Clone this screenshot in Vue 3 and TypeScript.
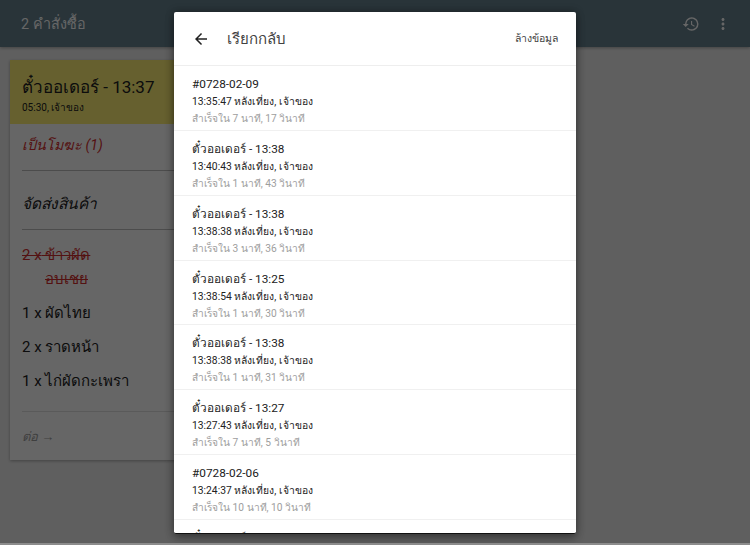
<script setup lang="ts">
interface Row { title: string; time: string; took: string }
const rows: Row[] = [
  { title: '#0728-02-09', time: '13:35:47 หลังเที่ยง, เจ้าของ', took: 'สำเร็จใน 7 นาที, 17 วินาที' },
  { title: 'ตั๋วออเดอร์ - 13:38', time: '13:40:43 หลังเที่ยง, เจ้าของ', took: 'สำเร็จใน 1 นาที, 43 วินาที' },
  { title: 'ตั๋วออเดอร์ - 13:38', time: '13:38:38 หลังเที่ยง, เจ้าของ', took: 'สำเร็จใน 3 นาที, 36 วินาที' },
  { title: 'ตั๋วออเดอร์ - 13:25', time: '13:38:54 หลังเที่ยง, เจ้าของ', took: 'สำเร็จใน 1 นาที, 30 วินาที' },
  { title: 'ตั๋วออเดอร์ - 13:38', time: '13:38:38 หลังเที่ยง, เจ้าของ', took: 'สำเร็จใน 1 นาที, 31 วินาที' },
  { title: 'ตั๋วออเดอร์ - 13:27', time: '13:27:43 หลังเที่ยง, เจ้าของ', took: 'สำเร็จใน 7 นาที, 5 วินาที' },
  { title: '#0728-02-06', time: '13:24:37 หลังเที่ยง, เจ้าของ', took: 'สำเร็จใน 10 นาที, 10 วินาที' },
  { title: 'ตั๋วออเดอร์ - 13:20', time: '13:20:11 หลังเที่ยง, เจ้าของ', took: 'สำเร็จใน 4 นาที, 12 วินาที' }
]
const items = [
  { n: '1 x', t: 'ผัดไทย' },
  { n: '2 x', t: 'ราดหน้า' },
  { n: '1 x', t: 'ไก่ผัดกะเพรา' }
]
</script>

<template>
  <div class="page">
    <div class="screen">
      <header class="bar">
        <span class="bar-title">2 คำสั่งซื้อ</span>
        <div class="bar-icons">
          <svg class="ic-history" viewBox="0 0 24 24" fill="currentColor"><path d="M13 3a9 9 0 0 0-9 9H1l3.89 3.89.07.14L9 12H6c0-3.87 3.13-7 7-7s7 3.13 7 7-3.13 7-7 7c-1.93 0-3.68-.79-4.94-2.06l-1.42 1.42A8.954 8.954 0 0 0 13 21a9 9 0 0 0 0-18zm-1 5v5l4.28 2.54.72-1.21-3.5-2.08V8H12z"/></svg>
          <svg class="ic-more" viewBox="0 0 24 24" fill="currentColor"><path d="M12 8c1.1 0 2-.9 2-2s-.9-2-2-2-2 .9-2 2 .9 2 2 2zm0 2c-1.1 0-2 .9-2 2s.9 2 2 2 2-.9 2-2-.9-2-2-2zm0 6c-1.1 0-2 .9-2 2s.9 2 2 2 2-.9 2-2-.9-2-2-2z"/></svg>
        </div>
      </header>
      <main class="content">
        <section class="card">
          <div class="card-head">
            <div class="card-title">ตั๋วออเดอร์ - 13:37</div>
            <div class="card-sub">05:30, เจ้าของ</div>
          </div>
          <div class="card-body">
            <div class="line note-void red">เป็นโมฆะ (1)</div>
            <div class="line note-ship">จัดส่งสินค้า</div>
            <div class="items">
              <div class="item red struck"><span>2 x</span> ข้าวผัด<br /><span class="indent">อบเชย</span></div>
              <div v-for="i in items" :key="i.t" class="item">{{ i.n }} {{ i.t }}</div>
            </div>
            <div class="next">ต่อ →</div>
          </div>
        </section>
      </main>
      <div class="scrim">
        <div class="dialog">
          <div class="dialog-head">
            <svg class="back" viewBox="0 0 24 24" fill="currentColor"><path d="M20 11H7.83l5.59-5.59L12 4l-8 8 8 8 1.41-1.41L7.83 13H20v-2z"/></svg>
            <span class="dialog-title">เรียกกลับ</span>
            <span class="clear">ล้างข้อมูล</span>
          </div>
          <div class="list">
            <div v-for="(r, idx) in rows" :key="idx" class="row">
              <div class="row-title">{{ r.title }}</div>
              <div class="row-time">{{ r.time }}</div>
              <div class="row-took">{{ r.took }}</div>
            </div>
          </div>
        </div>
      </div>
    </div>
    <div class="strip"></div>
  </div>
</template>

<style>
html, body { margin: 0; overflow: hidden; }
</style>

<style scoped>
.page {
  width: 750px;
  height: 545px;
  overflow: hidden;
  font-family: Roboto, "Noto Sans", "Liberation Sans", sans-serif;
  color: #212121;
}
.screen {
  position: relative;
  height: 543px;
  overflow: hidden;
  background: #eeeeee;
}
.strip { height: 2px; background: #8c8c8c; }
.bar {
  height: 47px;
  background: #66828f;
  color: #fff;
  display: flex;
  align-items: center;
  justify-content: space-between;
  padding: 0 18px 0 21px;
  box-sizing: border-box;
  box-shadow: 0 1px 3px rgba(0, 0, 0, .3);
}
.bar-title { font-size: 14.4px; }
.bar-icons { display: flex; align-items: center; gap: 14px; }
.ic-history { width: 18px; height: 18px; }
.ic-more { width: 18px; height: 18px; }
.content { padding: 13px 10px; }
.card {
  width: 330px;
  background: #fff;
  box-shadow: 0 1px 3px rgba(0, 0, 0, .3);
}
.card-head {
  background: #fff176;
  height: 64px;
  box-sizing: border-box;
  padding: 15px 12px 0;
}
.card-title { font-size: 17px; line-height: 24px; margin-bottom: 2px; }
.card-sub { font-size: 10px; line-height: 14px; }
.card-body { padding: 0 12px; }
.line { border-bottom: 1px solid #bdbdbd; font-style: italic; display: flex; align-items: center; }
.note-void { height: 47px; padding-bottom: 5px; box-sizing: border-box; font-size: 14.2px; }
.note-ship { height: 59px; padding-top: 6px; box-sizing: border-box; font-size: 15.4px; }
.red { color: #d32f2f; }
.items { padding: 13px 0 8px; border-bottom: 1px solid #e0e0e0; font-size: 15px; }
.item { line-height: 24px; margin-bottom: 10px; }
.struck { text-decoration: line-through; }
.indent { margin-left: 23px; }
.next { height: 48px; display: flex; align-items: center; font-style: italic; font-size: 13px; color: #9e9e9e; }
.scrim {
  position: absolute;
  inset: 0;
  background: rgba(0, 0, 0, .6);
  display: flex;
  justify-content: center;
  align-items: flex-start;
  padding-top: 12px;
  box-sizing: border-box;
}
.dialog {
  width: 402px;
  height: 522px;
  background: #fff;
  border-radius: 2px;
  border-bottom: 1px solid #111;
  box-sizing: border-box;
  overflow: hidden;
  box-shadow: 0 4px 10px rgba(0, 0, 0, .3), 0 0 8px rgba(0, 0, 0, .3);
}
.dialog-head {
  height: 53px;
  display: flex;
  align-items: center;
  border-bottom: 1px solid #eeeeee;
  padding: 0 18px;
}
.back { width: 18px; height: 18px; color: #212121; flex: none; }
.dialog-title { font-size: 15px; margin-left: 17px; flex: 1; color: #424242; }
.clear { font-size: 10.5px; color: #424242; }
.row {
  height: 64.86px;
  box-sizing: border-box;
  border-bottom: 1px solid #f0f0f0;
  padding: 8px 18px 0;
}
.row-title { font-size: 11.8px; line-height: 20px; color: #212121; }
.row-time { font-size: 10.3px; line-height: 15px; color: #222; }
.row-took { font-size: 10.2px; line-height: 19px; color: #9e9e9e; }
</style>
